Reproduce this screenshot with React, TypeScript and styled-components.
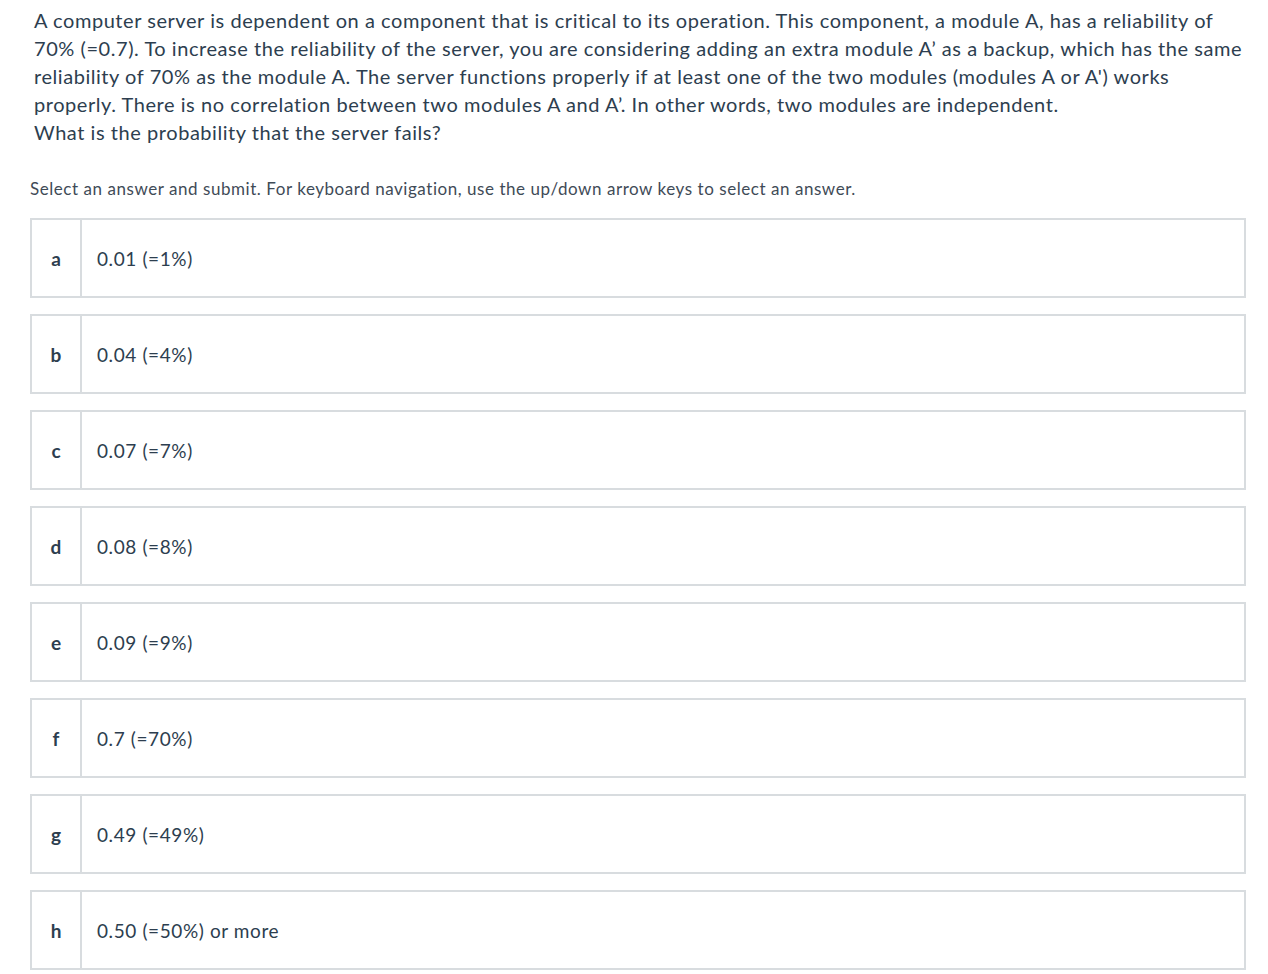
import React from "react";
import styled, { createGlobalStyle } from "styled-components";

const GlobalStyle = createGlobalStyle`
  body {
    margin: 0;
    background: #ffffff;
    font-family: "Source Sans Pro", Lato, "Liberation Sans", sans-serif;
    color: #2d3e4f;
  }
`;

const Page = styled.div`
  padding: 6px 22px 0 30px;
`;

const Question = styled.div`
  font-size: 20px;
  line-height: 28px;
  letter-spacing: 0.55px;
  padding-left: 4px;
  color: #2d3e4f;
`;

const Hint = styled.div`
  margin-top: 31px;
  font-size: 17px;
  line-height: 24px;
  letter-spacing: 0.55px;
  color: #3f4b57;
`;

const List = styled.div`
  margin-top: 17px;
  display: flex;
  flex-direction: column;
  gap: 16px;
`;

const Choice = styled.div`
  display: flex;
  height: 80px;
  box-sizing: border-box;
  border: 2px solid #d8dcdf;
  background: #ffffff;
`;

const Letter = styled.div`
  width: 48px;
  flex: none;
  border-right: 2px solid #d8dcdf;
  display: flex;
  align-items: center;
  justify-content: center;
  font-size: 19px;
  font-weight: 700;
  color: #2d3e4f;
`;

const Label = styled.div`
  display: flex;
  align-items: center;
  padding-left: 15px;
  font-size: 19px;
  letter-spacing: 0.6px;
  color: #2d3e4f;
`;

const answers: [string, string][] = [
  ["a", "0.01 (=1%)"],
  ["b", "0.04 (=4%)"],
  ["c", "0.07 (=7%)"],
  ["d", "0.08 (=8%)"],
  ["e", "0.09 (=9%)"],
  ["f", "0.7 (=70%)"],
  ["g", "0.49 (=49%)"],
  ["h", "0.50 (=50%) or more"],
];

const App = () => {
  return (
    <Page>
      <GlobalStyle />
      <Question>
        A computer server is dependent on a component that is critical to its operation. This component, a module A, has a reliability of
        <br />
        70% (=0.7). To increase the reliability of the server, you are considering adding an extra module A’ as a backup, which has the same
        <br />
        reliability of 70% as the module A. The server functions properly if at least one of the two modules (modules A or A') works
        <br />
        properly. There is no correlation between two modules A and A’. In other words, two modules are independent.
        <br />
        What is the probability that the server fails?
      </Question>
      <Hint>
        Select an answer and submit. For keyboard navigation, use the up/down arrow keys to select an answer.
      </Hint>
      <List>
        {answers.map(([letter, text]) => (
          <Choice key={letter}>
            <Letter>{letter}</Letter>
            <Label>{text}</Label>
          </Choice>
        ))}
      </List>
    </Page>
  );
};

export default App;
